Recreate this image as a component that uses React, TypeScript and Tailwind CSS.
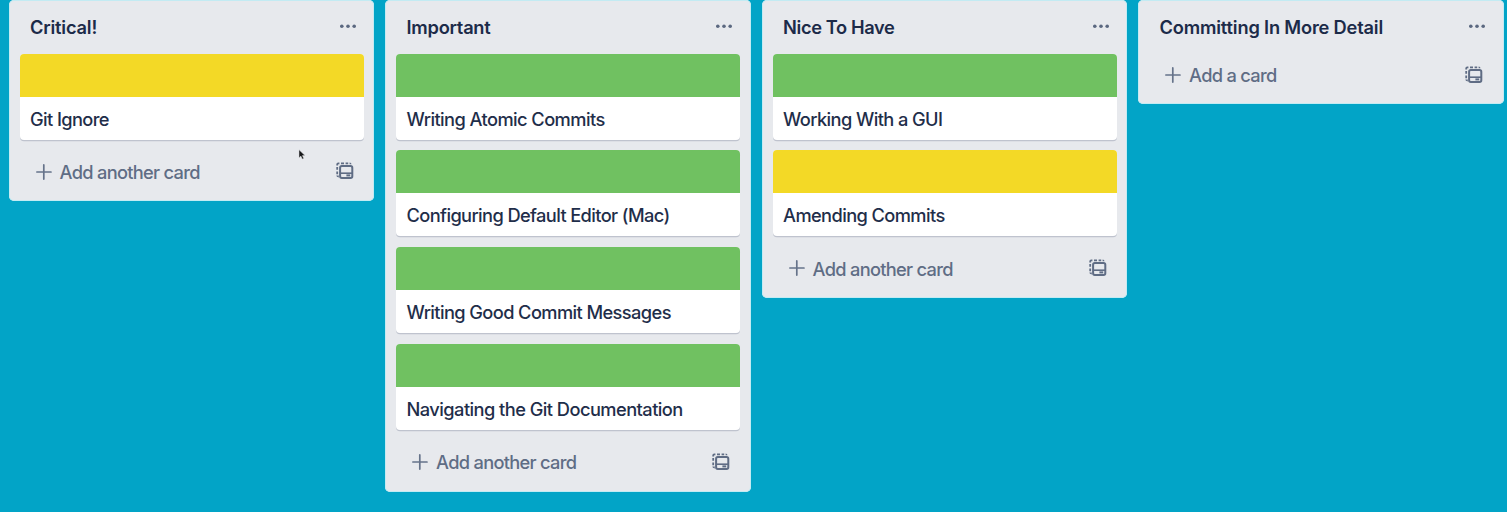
type Label = "green" | "yellow";

interface Card {
  title: string;
  label: Label;
  tracking: string;
}

interface List {
  title: string;
  tracking: string;
  cards: Card[];
}

const lists: List[] = [
  {
    title: "Critical!",
    tracking: "tracking-[-0.2px]",
    cards: [{ title: "Git Ignore", label: "yellow", tracking: "tracking-[-0.62px]" }],
  },
  {
    title: "Important",
    tracking: "tracking-[-0.25px]",
    cards: [
      { title: "Writing Atomic Commits", label: "green", tracking: "tracking-[-0.57px]" },
      { title: "Configuring Default Editor (Mac)", label: "green", tracking: "tracking-[-0.62px]" },
      { title: "Writing Good Commit Messages", label: "green", tracking: "tracking-[-0.6px]" },
      { title: "Navigating the Git Documentation", label: "green", tracking: "tracking-[-0.55px]" },
    ],
  },
  {
    title: "Nice To Have",
    tracking: "tracking-[-0.37px]",
    cards: [
      { title: "Working With a GUI", label: "green", tracking: "tracking-[-0.6px]" },
      { title: "Amending Commits", label: "yellow", tracking: "tracking-[-0.6px]" },
    ],
  },
  { title: "Committing In More Detail", tracking: "tracking-[-0.18px]", cards: [] },
];

const labelColors: Record<Label, string> = {
  green: "bg-[#70c161]",
  yellow: "bg-[#f3d926]",
};

function DotsIcon() {
  return (
    <svg className="mb-0.5" width="18" height="6" viewBox="0 0 18 6" fill="#5b6880">
      <circle cx="2.8" cy="3.2" r="1.8" />
      <circle cx="9" cy="3.2" r="1.8" />
      <circle cx="15.2" cy="3.2" r="1.8" />
    </svg>
  );
}

function PlusIcon() {
  return (
    <svg className="mb-px" width="16" height="16" viewBox="0 0 16 16" fill="none" stroke="#66738a" strokeWidth="1.7" strokeLinecap="round">
      <path d="M7.8 0.9v14.2M0.8 8h14.2" />
    </svg>
  );
}

function TemplateIcon() {
  return (
    <svg width="18" height="17" viewBox="0 0 18 17" fill="none" stroke="#5f6c84">
      <path d="M1.2 3.5V2.4Q1.2 1.3 2.3 1.3H3.4M5 1.3H8M9.6 1.3H12.2M13.6 1.3q1 0 1 1M1.2 5v2.8M1.2 9.4v2.8M1.2 13.6q0 .9 1.6 .9" strokeWidth="1.8" />
      <rect x="4.1" y="4.1" width="12.2" height="11.8" rx="1.7" strokeWidth="2" />
      <path d="M4.1 11.2h12.2" strokeWidth="1.6" />
      <path d="M10.4 12.4h3.8v2h-3.8z" fill="#5f6c84" stroke="none" />
    </svg>
  );
}

function CardView({ card }: { card: Card }) {
  return (
    <article className="mb-[10.8px] h-[86px] overflow-hidden rounded-[4px] bg-white shadow-[0_1.3px_0_#bfc3ce]">
      <div className={`h-[43px] ${labelColors[card.label]}`} />
      <p className={`flex h-[43px] items-center whitespace-nowrap pl-[10.5px] pt-[1.2px] text-[18.25px] font-[450] leading-6 text-[#1f2e4a] ${card.tracking}`}>
        {card.title}
      </p>
    </article>
  );
}

function ListView({ list }: { list: List }) {
  return (
    <section className="w-[365.5px] shrink-0 rounded-[5px] bg-[#e7e9ed] px-[10.75px] shadow-[inset_0_0_0_1px_#c3ebf3]">
      <header className="flex h-[53.6px] items-center justify-between pl-[10.5px] pr-[6.8px]">
        <h2 className={`whitespace-nowrap text-[18.25px] font-semibold leading-6 text-[#1c2b49] ${list.tracking}`}>{list.title}</h2>
        <DotsIcon />
      </header>
      {list.cards.map((card) => (
        <CardView key={card.title} card={card} />
      ))}
      <footer className="flex h-[50.8px] items-start justify-between pl-4 pr-[9.9px] pt-[9.7px]">
        <button className="flex items-center gap-2 whitespace-nowrap text-[18.25px] font-[450] leading-6 tracking-[-0.7px] text-[#5f6d85]">
          <PlusIcon />
          {list.cards.length > 0 ? "Add another card" : "Add a card"}
        </button>
        <button className="mt-[2.4px]" aria-label="Create from template">
          <TemplateIcon />
        </button>
      </footer>
    </section>
  );
}

export default function App() {
  return (
    <main className="relative flex h-[512px] w-full items-start gap-[11px] overflow-hidden bg-[#02a4c7] pl-[8.8px] font-['Inter','Liberation_Sans',sans-serif]">
      {lists.map((list) => (
        <ListView key={list.title} list={list} />
      ))}
      <svg className="absolute left-[298px] top-[149px]" width="8" height="11" viewBox="0 0 8 11">
        <path d="M1 .8v8l1.9-1.7 1.3 3 1.5-.7-1.3-2.8H7z" fill="#161719" stroke="#d5d6d9" strokeWidth=".5" />
      </svg>
    </main>
  );
}
